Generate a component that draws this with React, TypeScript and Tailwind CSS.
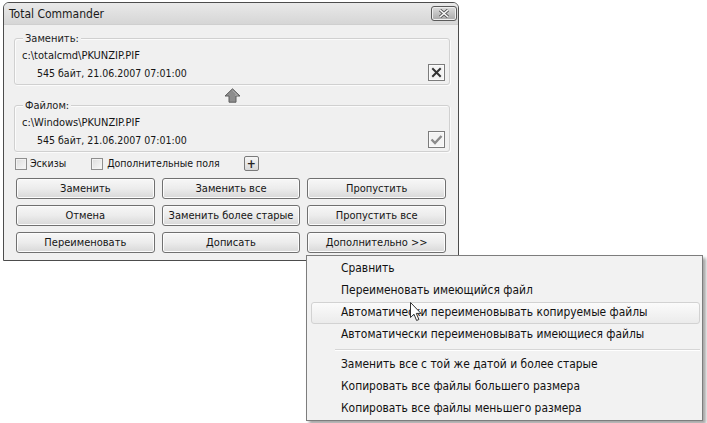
import React from "react";

function Btn({ children }: { children: React.ReactNode }) {
  return (
    <div className="h-[21px] flex items-center justify-center rounded-[3px] border border-[#707070] bg-linear-to-b from-[#f7f7f7] via-[#ececec] to-[#d8d8d8] shadow-[inset_0_0_0_1px_#fcfcfc] text-[#151515] leading-none">
      {children}
    </div>
  );
}

function Check() {
  return <div className="w-[12px] h-[12px] border border-[#8e8e8e] bg-linear-to-br from-[#dcdcdc] to-[#f8f8f8] shadow-[inset_0_0_0_1px_#f2f2f2]" />;
}

function GroupBox({ label, path, info, mark }: { label: string; path: string; info: string; mark: "x" | "v" }) {
  return (
    <div className="relative h-[47px] border border-[#d0d0d0] rounded-[3px] shadow-[inset_1px_1px_0_#fbfbfb,1px_1px_0_#fbfbfb]">
      <span className="absolute left-[8px] -top-[7px] px-[2px] bg-[#f0f0f0] leading-[14px] text-[#222]">{label}</span>
      <div className="flex flex-col pl-[7px] pr-[4px]">
        <div className="mt-[10px] leading-[14px] text-[#151515]">{path}</div>
        <div className="flex items-center justify-between mt-[1px]">
          <span className="pl-[15px] leading-[14px] text-[#151515] text-[10.5px] mt-[1px]">{info}</span>
          <div className="w-[17px] h-[17px] border border-[#7c7c7c] bg-[#f3f3f3] flex items-center justify-center shadow-[inset_0_0_0_1px_#fafafa]">
            {mark === "x" ? (
              <svg width="11" height="11" viewBox="0 0 11 11">
                <path d="M2 2 L9 9 M9 2 L2 9" stroke="#333" strokeWidth="2" strokeLinecap="square" />
              </svg>
            ) : (
              <svg width="13" height="11" viewBox="0 0 13 11">
                <path d="M1.5 5.5 L5 9 L11.5 2" stroke="#8a8a8a" strokeWidth="2.4" fill="none" />
              </svg>
            )}
          </div>
        </div>
      </div>
    </div>
  );
}

function MenuItem({ children, active }: { children: React.ReactNode; active?: boolean }) {
  return (
    <div
      className={
        "h-[22px] ml-[4px] mr-[2px] pl-[29px] flex items-center rounded-[3px] border whitespace-nowrap text-[#111] " +
        (active
          ? "border-[#d2d2d2] bg-linear-to-b from-[#fbfbfb] to-[#ebebeb]"
          : "border-transparent")
      }
    >
      {children}
    </div>
  );
}

export default function App() {
  return (
    <div className="relative w-[707px] h-[423px] bg-white overflow-hidden font-['DejaVu_Sans_Condensed','DejaVu_Sans',sans-serif] text-[11px]">
      <div className="ml-[3px] mt-[2px] w-[456px] h-[259px] border border-[#4c4c4c] rounded-t-[6px] bg-[#f0f0f0] flex flex-col overflow-hidden">
        <div className="h-[22px] flex items-center justify-between bg-linear-to-b from-[#e9e9e9] to-[#d6d6d6] border-b border-[#cfcfcf] pl-[5px] pr-[1px]">
          <span className="text-[12px] text-[#1a1a1a] leading-none">Total Commander</span>
          <div className="w-[26px] h-[15px] mb-[1px] rounded-[3px] border border-[#5a5a5a] bg-linear-to-b from-[#dcdcdc] to-[#a9a9a9] flex items-center justify-center shadow-[inset_0_0_0_1px_#eeeeee]">
            <svg width="12" height="9" viewBox="0 0 12 9">
              <path d="M2 1 L10 8 M10 1 L2 8" stroke="#555" strokeWidth="3.2" />
              <path d="M2 1 L10 8 M10 1 L2 8" stroke="#fafafa" strokeWidth="1.6" />
            </svg>
          </div>
        </div>
        <div className="flex flex-col pl-[10px] pr-[8px] pt-[13px]">
          <GroupBox label="Заменить:" path="c:\totalcmd\PKUNZIP.PIF" info="545 байт, 21.06.2007 07:01:00" mark="x" />
          <div className="h-[20px] flex justify-center pt-[3px]">
            <svg width="17" height="15" viewBox="0 0 17 15">
              <path d="M8.5 0.8 L16 8 L12 8 L12 14.2 L5 14.2 L5 8 L1 8 Z" fill="#8d8d8d" stroke="#5f5f5f" strokeWidth="1" />
              <path d="M8.5 2.5 L13.5 7.2 L11 7.2" fill="none" stroke="#b5b5b5" strokeWidth="0.8" />
            </svg>
          </div>
          <GroupBox label="Файлом:" path="c:\Windows\PKUNZIP.PIF" info="545 байт, 21.06.2007 07:01:00" mark="v" />
          <div className="mt-[4px] h-[15px] flex items-center text-[10.5px]">
            <div className="ml-[1px]"><Check /></div>
            <span className="ml-[3px] text-[#151515]">Эскизы</span>
            <div className="ml-[25px]"><Check /></div>
            <span className="ml-[4px] text-[#151515]">Дополнительные поля</span>
            <div className="ml-[24px] w-[15px] h-[15px] rounded-[2px] border border-[#7a7a7a] bg-linear-to-b from-[#f6f6f6] to-[#d9d9d9] flex items-center justify-center text-[12px] font-bold leading-none text-[#222]">+</div>
          </div>
          <div className="mt-[7px] ml-[2px] w-[430px] grid grid-cols-3 gap-x-[7px] gap-y-[6px]">
            <Btn>Заменить</Btn>
            <Btn>Заменить все</Btn>
            <Btn>Пропустить</Btn>
            <Btn>Отмена</Btn>
            <Btn>Заменить более старые</Btn>
            <Btn>Пропустить все</Btn>
            <Btn>Переименовать</Btn>
            <Btn>Дописать</Btn>
            <Btn>Дополнительно &gt;&gt;</Btn>
          </div>
        </div>
      </div>

      <div className="absolute left-[306px] top-[255px] w-[397px] h-[166px] border border-[#7d7d7d] bg-[#f2f2f2] shadow-[3px_3px_3px_rgba(0,0,0,0.35)] pt-[2px] text-[11.9px]">
        <MenuItem>Сравнить</MenuItem>
        <MenuItem>Переименовать имеющийся файл</MenuItem>
        <MenuItem active>Автоматически переименовывать копируемые файлы</MenuItem>
        <MenuItem>Автоматически переименовывать имеющиеся файлы</MenuItem>
        <div className="h-[8px] ml-[28px] mr-[2px] flex flex-col justify-center">
          <div className="border-t border-[#d6d6d6] border-b border-b-white" />
        </div>
        <MenuItem>Заменить все с той же датой и более старые</MenuItem>
        <MenuItem>Копировать все файлы большего размера</MenuItem>
        <MenuItem>Копировать все файлы меньшего размера</MenuItem>
      </div>

      <svg className="absolute left-[410px] top-[302px]" width="13" height="20" viewBox="0 0 13 20">
        <path d="M0.5 0.5 L0.5 15.5 L4 12.2 L6.6 18.5 L8.9 17.5 L6.3 11.4 L11 11.4 Z" fill="#fff" stroke="#333" strokeWidth="1" />
      </svg>
    </div>
  );
}
